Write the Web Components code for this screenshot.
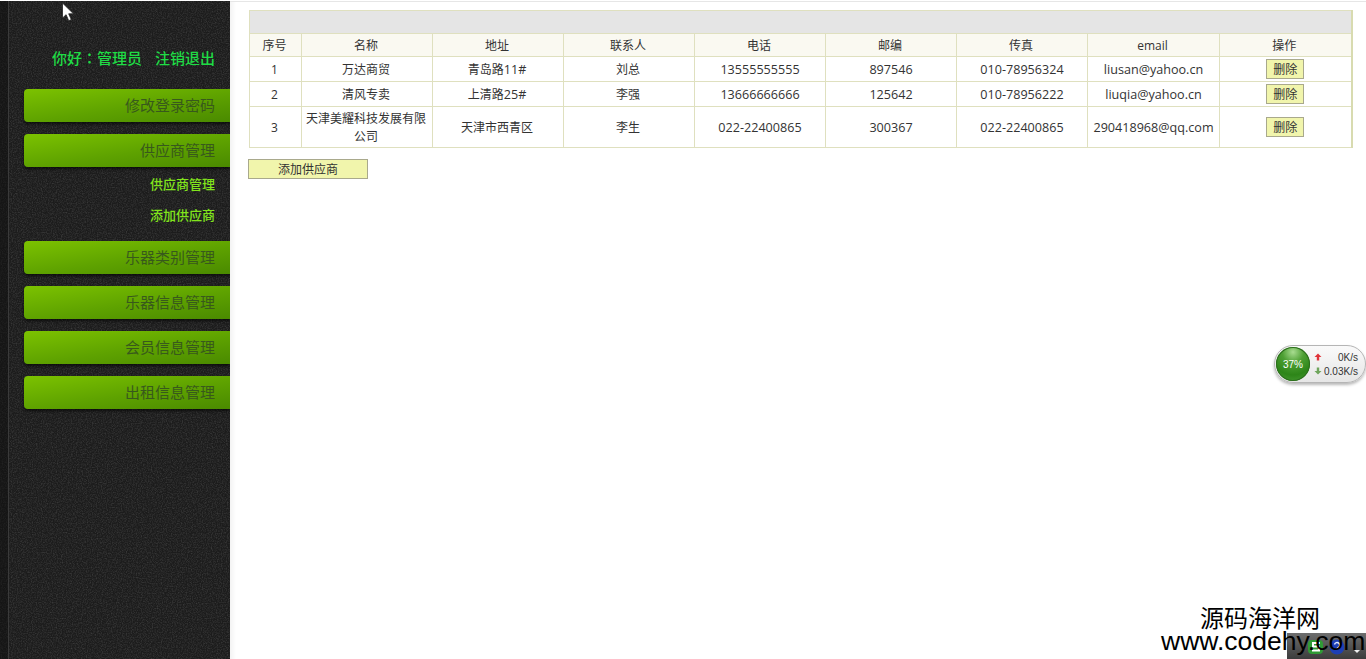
<!DOCTYPE html>
<html lang="zh">
<head>
<meta charset="utf-8">
<title>供应商管理</title>
<style>
  html, body { margin: 0; height: 100%; overflow: hidden; background: #fff; }
  body { font-family: "Open Sans", "Noto Sans CJK SC", sans-serif; font-size: 12px; color: #222; }
</style>
</head>
<body>
<app-shell>
  <side-bar slot="side">
    <menu-item>修改登录密码</menu-item>
    <menu-item>供应商管理</menu-item>
    <sub-item>供应商管理</sub-item>
    <sub-item>添加供应商</sub-item>
    <menu-item gap>乐器类别管理</menu-item>
    <menu-item>乐器信息管理</menu-item>
    <menu-item>会员信息管理</menu-item>
    <menu-item>出租信息管理</menu-item>
  </side-bar>
  <supplier-table></supplier-table>
  <flat-button wide>添加供应商</flat-button>
</app-shell>
<mouse-cursor></mouse-cursor>
<net-widget></net-widget>
<tray-icons></tray-icons>
<water-mark></water-mark>

<script>
const suppliers = [
  ['1', '万达商贸', '青岛路<i>11#</i>', '刘总', '13555555555', '897546', '010-78956324', 'liusan@yahoo.cn'],
  ['2', '清风专卖', '上清路<i>25#</i>', '李强', '13666666666', '125642', '010-78956222', 'liuqia@yahoo.cn'],
  ['3', '天津美耀科技发展有限公司', '天津市西青区', '李生', '022-22400865', '300367', '022-22400865', '290418968@qq.com'],
];

customElements.define('app-shell', class AppShell extends HTMLElement {
  constructor() {
    super();
    this.attachShadow({ mode: 'open' }).innerHTML = `
      <style>
        :host { display: flex; height: 659px; }
        .main {
          flex: 1;
          margin-top: 1px;
          border-top: 1px solid #e6e6e6;
          padding: 8px 12px 0 19px;
          background: linear-gradient(90deg, #f3f3f3, #fff 6px);
        }
      </style>
      <slot name="side"></slot>
      <div class="main"><slot></slot></div>`;
  }
});

customElements.define('side-bar', class SideBar extends HTMLElement {
  constructor() {
    super();
    this.attachShadow({ mode: 'open' }).innerHTML = `
      <style>
        :host {
          display: block;
          position: relative;
          width: 230px;
          height: 658px;
          margin-top: 1px;
          box-sizing: border-box;
          padding: 47px 0 0 24px;
          background: #222;
          overflow: hidden;
        }
        svg { position: absolute; left: 0; top: 0; width: 230px; height: 658px; }
        .hello {
          position: relative;
          height: 41px;
          padding-right: 15px;
          text-align: right;
          font-size: 15px;
          font-weight: 500;
          line-height: 20px;
          color: #1fdc45;
          white-space: nowrap;
        }
        .hello b { font-family: "Noto Sans CJK TC", sans-serif; font-weight: 500; }
        .hello span { margin-left: 13px; }
        .menu { position: relative; }
      </style>
      <svg aria-hidden="true">
        <filter id="grain" x="0" y="0" width="100%" height="100%">
          <feTurbulence type="fractalNoise" baseFrequency="0.8" numOctaves="2" seed="4"/>
          <feColorMatrix values="0 0 0 0 0.62  0 0 0 0 0.62  0 0 0 0 0.62  0 0 0 1.1 -0.42"/>
        </filter>
        <rect width="230" height="658" fill="#1c1c1c"/>
        <rect width="230" height="658" filter="url(#grain)" opacity="0.3"/>
        <rect width="8" height="658" fill="#111" opacity="0.55"/>
        <rect x="8" width="1" height="658" fill="#3a3a3a"/>
      </svg>
      <div class="hello">你好<b lang="zh-Hant">：</b>管理员<span>注销退出</span></div>
      <div class="menu"><slot></slot></div>`;
  }
});

customElements.define('menu-item', class MenuItem extends HTMLElement {
  constructor() {
    super();
    this.attachShadow({ mode: 'open' }).innerHTML = `
      <style>
        :host {
          display: flex;
          justify-content: flex-end;
          align-items: center;
          box-sizing: border-box;
          height: 33px;
          margin-bottom: 12px;
          padding: 0 15px 2px 0;
          font-size: 15px;
          color: #38591c;
          border-radius: 4px 0 0 4px;
          background: linear-gradient(172deg, #7cc200 0%, #5ea200 55%, #4a8a00 100%);
          box-shadow: 0 2px 3px rgba(0, 0, 0, .6);
        }
        :host([gap]) { margin-top: 7px; }
      </style>
      <slot></slot>`;
  }
});

customElements.define('sub-item', class SubItem extends HTMLElement {
  constructor() {
    super();
    this.attachShadow({ mode: 'open' }).innerHTML = `
      <style>
        :host {
          display: block;
          height: 31px;
          margin-top: -7px;
          margin-bottom: 7px;
          padding-right: 15px;
          text-align: right;
          font-size: 13px;
          font-weight: 500;
          line-height: 24px;
          color: #82e41c;
        }
        :host(:last-of-type) { margin-bottom: 0; }
      </style>
      <slot></slot>`;
  }
});

customElements.define('flat-button', class FlatButton extends HTMLElement {
  constructor() {
    super();
    this.attachShadow({ mode: 'open' }).innerHTML = `
      <style>
        :host {
          display: inline-block;
          box-sizing: border-box;
          width: 38px;
          height: 20px;
          border: 1px solid #a9a98c;
          background: #f1f5ac;
          text-align: center;
          font-size: 12px;
          line-height: 19px;
          color: #333;
          overflow: hidden;
        }
        :host([wide]) { display: block; width: 120px; margin: 11px 0 0 -1px; }
      </style>
      <slot></slot>`;
  }
});

customElements.define('supplier-table', class SupplierTable extends HTMLElement {
  constructor() {
    super();
    const heads = ['序号', '名称', '地址', '联系人', '电话', '邮编', '传真', 'email', '操作'];
    const widths = [52, 131, 131, 131, 131, 131, 131, 132, 132];
    const rows = suppliers.map((r) => `
      <tr>
        ${r.map((c, i) => `<td class="${i >= 4 ? 'lat' : ''}">${c}</td>`).join('')}
        <td class="lat"><flat-button>删除</flat-button></td>
      </tr>`).join('');
    this.attachShadow({ mode: 'open' }).innerHTML = `
      <style>
        :host { display: block; width: 1103px; }
        table {
          width: 1103px;
          table-layout: fixed;
          border-collapse: collapse;
          border: 1px solid #d8dbb0;
          border-right-width: 2px;
          color: #333;
        }
        th, td {
          border: 1px solid #dfe0bf;
          padding: 1px 5px 0 3px;
          text-align: center;
          font-weight: normal;
          font-size: 12px;
          line-height: 18px;
        }
        .title { height: 22px; background: #e5e5e5; padding: 0; }
        .head th { height: 21px; background: #faf9f1; }
        tbody td { height: 23px; }
        tbody tr:last-child td { height: 39px; }
        .lat, i { font-size: 12.6px; font-style: normal; }
        td.lat { padding: 1px 4px 0; }
        flat-button { vertical-align: middle; margin-top: -2px; }
      </style>
      <table>
        <colgroup>${widths.map((w) => `<col style="width:${w}px">`).join('')}</colgroup>
        <thead>
          <tr><th class="title" colspan="9"></th></tr>
          <tr class="head">${heads.map((h) => `<th>${h}</th>`).join('')}</tr>
        </thead>
        <tbody>${rows}</tbody>
      </table>`;
  }
});

customElements.define('mouse-cursor', class MouseCursor extends HTMLElement {
  constructor() {
    super();
    this.attachShadow({ mode: 'open' }).innerHTML = `
      <style>:host { position: absolute; left: 61px; top: 2px; width: 14px; height: 20px; }</style>
      <svg width="14" height="20" viewBox="0 0 14 20" aria-hidden="true">
        <path d="M1.5 1v15l3.6-3.3 2.6 6 2.6-1.1-2.6-5.800h4.800z" fill="#fff" stroke="#222" stroke-width=".8"/>
      </svg>`;
  }
});

customElements.define('net-widget', class NetWidget extends HTMLElement {
  constructor() {
    super();
    this.attachShadow({ mode: 'open' }).innerHTML = `
      <style>
        :host {
          position: absolute;
          left: 1274px;
          top: 345px;
          width: 92px;
          height: 38px;
          box-sizing: border-box;
          display: flex;
          align-items: center;
          gap: 4px;
          padding-left: 1px;
          border: 1px solid #b5b5b5;
          border-radius: 19px;
          background: linear-gradient(#fafafa, #e6e6e6);
          box-shadow: 0 2px 3px rgba(0, 0, 0, .28);
          font-family: "Liberation Sans", sans-serif;
        }
        .ball {
          flex: none;
          width: 34px;
          height: 34px;
          border-radius: 50%;
          display: flex;
          align-items: center;
          justify-content: center;
          font-size: 10px;
          color: #fff;
          background: radial-gradient(circle at 50% 15%, #a8dc90 0, #4ea034 32%, #2d8518 68%, #4c9e38 100%);
          box-shadow: inset 0 0 0 1px #2c6d1d;
        }
        .rates { flex: 1; display: grid; grid-template-columns: 10px 1fr; align-items: center; row-gap: 1px; padding-right: 8px; font-size: 10px; color: #333; }
        .rates svg { display: block; }
        .rates span { text-align: right; line-height: 13px; }
      </style>
      <div class="ball">37%</div>
      <div class="rates">
        <svg width="8" height="8" viewBox="0 0 8 8" aria-hidden="true"><path d="M4 .5 7.500 4H5.200v3.500H2.800V4H.5z" fill="#e0343a"/></svg>
        <span>0K/s</span>
        <svg width="8" height="8" viewBox="0 0 8 8" aria-hidden="true"><path d="M4 7.500 .5 4h2.300V.5h2.400V4h2.300z" fill="#6fa55c"/></svg>
        <span>0.03K/s</span>
      </div>`;
  }
});

customElements.define('tray-icons', class TrayIcons extends HTMLElement {
  constructor() {
    super();
    this.attachShadow({ mode: 'open' }).innerHTML = `
      <style>
        :host {
          position: absolute;
          left: 1287px;
          top: 633px;
          width: 79px;
          height: 26px;
          background: linear-gradient(#6e6e6e, #3c3c3c);
        }
        svg { display: block; }
      </style>
      <svg width="79" height="26" viewBox="0 0 79 26" aria-hidden="true">
        <rect x="21" y="7" width="15" height="14" rx="4" fill="#2f9a35"/>
        <path d="M33 10h-7v3.500h6v4h-7" fill="none" stroke="#fff" stroke-width="2"/>
        <circle cx="50" cy="14" r="7.500" fill="#1d3fb5"/>
        <path d="M47.500 11.500a2.600 2.600 0 1 1 3.500 3l-1 1v1.500" fill="none" stroke="#dde6ff" stroke-width="1.400"/>
        <path d="M67 17h6l-3 3z" fill="#eee"/>
      </svg>`;
  }
});

customElements.define('water-mark', class WaterMark extends HTMLElement {
  constructor() {
    super();
    this.attachShadow({ mode: 'open' }).innerHTML = `
      <style>
        :host {
          position: absolute;
          left: 1150px;
          top: 605px;
          width: 216px;
          display: flex;
          flex-direction: column;
          color: #000;
        }
        .cn { margin-left: 50px; font: 24px/24px "Noto Sans CJK SC", sans-serif; }
        .en { margin-left: 11px; font: 26.500px/24px "Liberation Sans", sans-serif; white-space: nowrap; }
      </style>
      <div class="cn">源码海洋网</div>
      <div class="en">www.codehy.com</div>`;
  }
});
</script>
</body>
</html>
